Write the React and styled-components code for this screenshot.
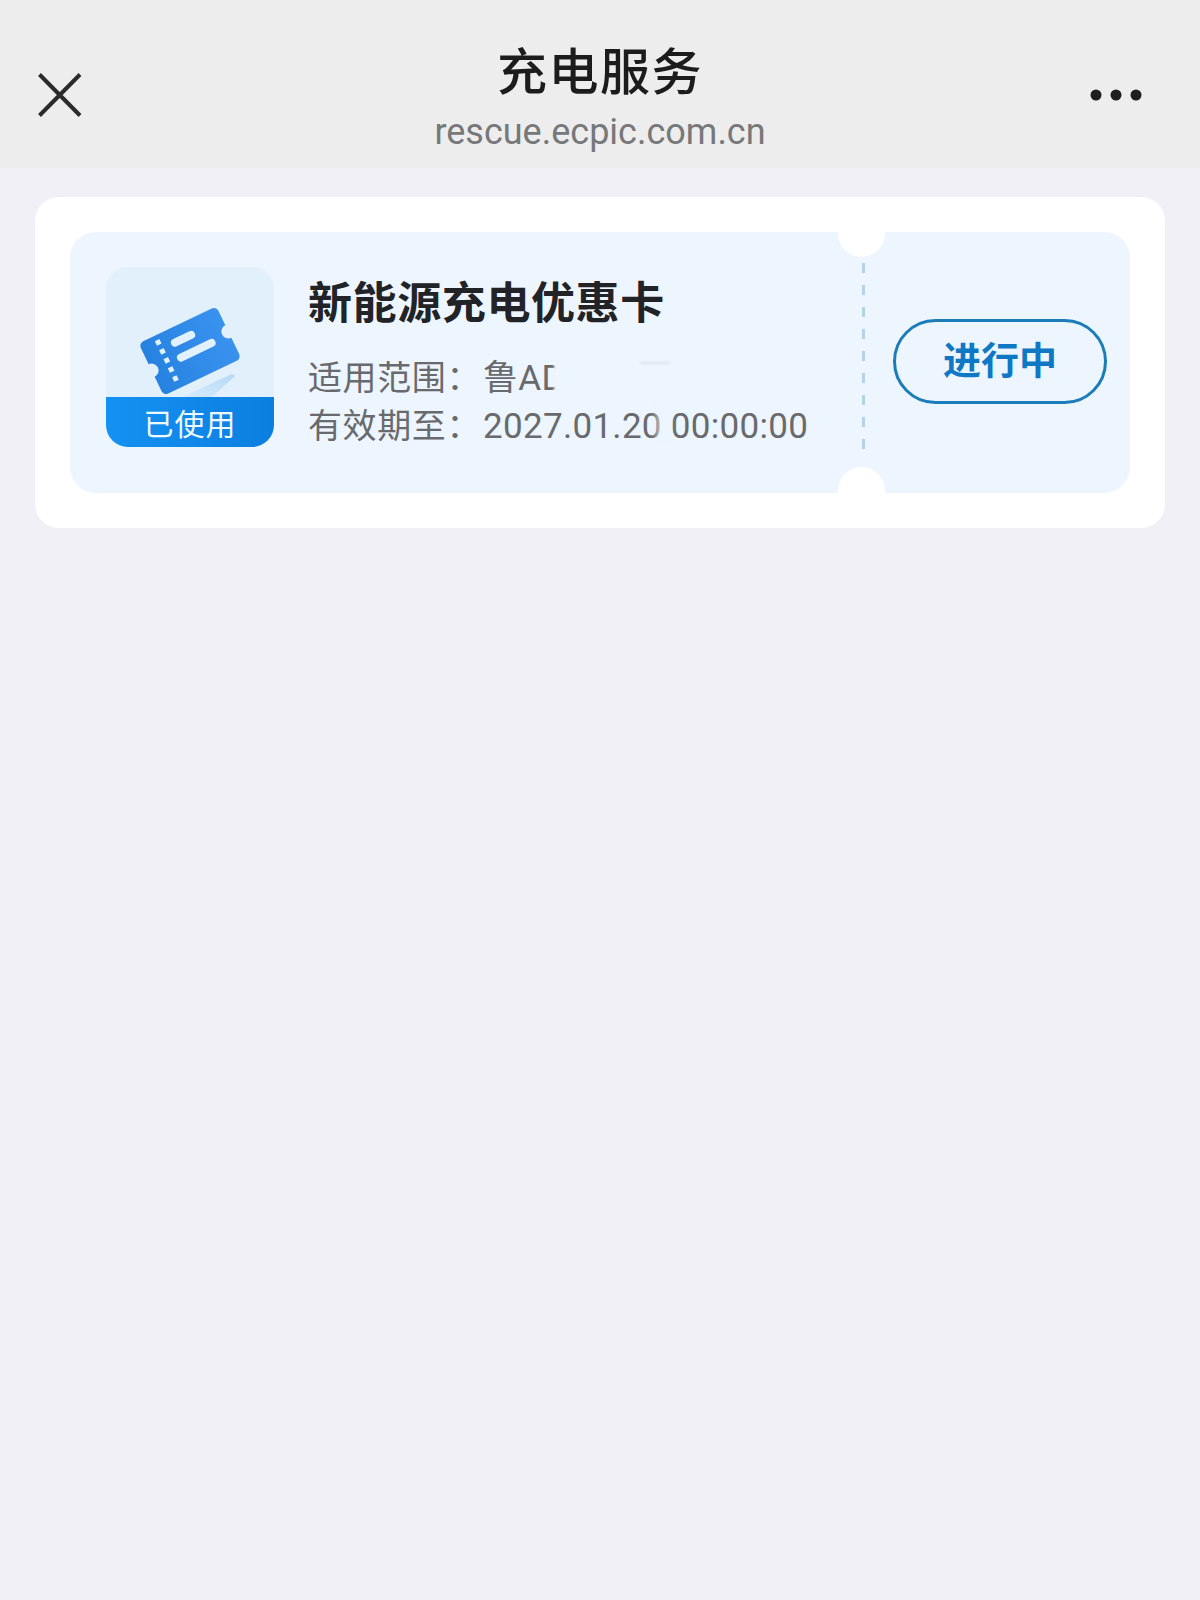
import styled, { createGlobalStyle } from 'styled-components'

const CJK = `'Noto Sans CJK SC', 'Noto Sans', sans-serif`
const LATIN = `Roboto, 'Noto Sans CJK SC', sans-serif`

const GlobalStyle = createGlobalStyle`
  html, body {
    margin: 0;
    padding: 0;
    background: #f0f0f6;
  }
  * {
    box-sizing: border-box;
  }
`

const Page = styled.div`
  width: 1200px;
  height: 1600px;
  background: #f0f0f6;
  font-family: ${CJK};
`

//-------------------------Header-----------------------
const Header = styled.header`
  height: 168px;
  background: #ededee;
  display: grid;
  grid-template-columns: 1fr auto 1fr;
  padding: 0 38px;
`

const IconButton = styled.div`
  display: flex;
  align-items: center;
  justify-content: ${(p) => (p.$end ? 'flex-end' : 'flex-start')};
  height: 44px;
  margin-top: 73px;
  padding-right: ${(p) => (p.$end ? '20px' : '0')};
  color: #2b2b2b;
`

const TitleBlock = styled.div`
  display: flex;
  flex-direction: column;
  align-items: center;
  padding-top: 32px;
`

const Title = styled.h1`
  margin: 0;
  font-size: 50px;
  line-height: 72px;
  font-weight: 500;
  letter-spacing: 1.5px;
  color: #1c1c1c;
`

const Url = styled.div`
  margin-top: 7px;
  font-family: ${LATIN};
  font-size: 36px;
  line-height: 42px;
  color: #77787a;
`

//-------------------------Card-----------------------
const Card = styled.section`
  margin: 29px 35px 0;
  padding: 35px;
  background: #fff;
  border-radius: 24px;
`

const Ticket = styled.div`
  position: relative;
  height: 261px;
  display: flex;
  background: #edf5fe;
  border-radius: 26px;
  overflow: hidden;
`

const Notch = styled.span`
  position: absolute;
  left: 768px;
  width: 47px;
  height: 47px;
  border-radius: 50%;
  background: #fff;
  ${(p) => (p.$bottom ? 'bottom: -21px;' : 'top: -22px;')}
`

const Main = styled.div`
  width: 792px;
  display: flex;
  gap: 34px;
  padding: 35px 0 0 36px;
`

const Thumb = styled.div`
  width: 168px;
  height: 180px;
  flex: none;
  border-radius: 22px;
  overflow: hidden;
  display: flex;
  flex-direction: column;
  background: #e2f0fb;
`

const ThumbArt = styled.svg`
  display: block;
  flex: 1;
`

const ThumbLabel = styled.div`
  height: 50px;
  background: linear-gradient(90deg, #1491f2, #0b7fe0);
  color: #eef8ff;
  font-size: 30px;
  line-height: 50px;
  text-align: center;
  letter-spacing: 1px;
`

const Info = styled.div`
  position: relative;
  flex: 1;
  min-width: 0;
`

const Name = styled.h2`
  margin: 0 0 20px;
  padding-top: 1px;
  font-size: 44px;
  line-height: 64px;
  font-weight: 700;
  letter-spacing: 0.6px;
  color: #222326;
  white-space: nowrap;
`

const Row = styled.div`
  display: flex;
  align-items: baseline;
  height: 48px;
  font-size: 34px;
  line-height: 48px;
  color: #696a6d;
  white-space: nowrap;
`

const RowLabel = styled.span`
  width: 175px;
  flex: none;
  letter-spacing: 0.6px;
`

const RowValue = styled.span`
  font-family: ${LATIN};
  font-size: 35px;
  letter-spacing: 0.3px;
`

// the plate number and part of the date are painted out in the source picture
const Smudge = styled.span`
  position: absolute;
  left: ${(p) => p.$left}px;
  top: ${(p) => p.$top}px;
  width: ${(p) => p.$width}px;
  height: ${(p) => p.$height}px;
  background: ${(p) => p.$color || '#edf5fe'};
  filter: blur(${(p) => p.$blur || 2}px);
`

const Divider = styled.div`
  width: 3px;
  flex: none;
  margin: 31px 0 41px;
  background: repeating-linear-gradient(180deg, #b3d3e6 0 10px, transparent 10px 22px);
`

const Stub = styled.div`
  flex: 1;
  display: flex;
  align-items: center;
  justify-content: flex-end;
  padding-right: 23px;
`

const StatusPill = styled.div`
  width: 214px;
  height: 85px;
  margin-top: -3px;
  border: 3px solid #1a7cb9;
  border-radius: 43px;
  color: #0f78c4;
  font-size: 38px;
  font-weight: 700;
  line-height: 72px;
  text-align: center;
`

const CloseIcon = () => (
  <svg width="44" height="44" viewBox="0 0 44 44" fill="none" stroke="currentColor" strokeWidth="4">
    <path d="M1.5 1.5 42 42.5M42 1.5 1.5 42.5" />
  </svg>
)

const MoreIcon = () => (
  <svg width="52" height="12" viewBox="0 0 52 12" fill="#1f1f1f">
    <circle cx="6" cy="6" r="5.5" />
    <circle cx="26" cy="6" r="5.5" />
    <circle cx="46" cy="6" r="5.5" />
  </svg>
)

const TicketArt = () => (
  <ThumbArt viewBox="0 0 168 130">
    <defs>
      <linearGradient id="ticketFill" x1="0" y1="0" x2="1" y2="0">
        <stop offset="0" stopColor="#2682e0" />
        <stop offset="1" stopColor="#3a92ef" />
      </linearGradient>
      <linearGradient id="ticketShade" x1="0" y1="1" x2="1" y2="0">
        <stop offset="0" stopColor="#d9ecfb" />
        <stop offset="1" stopColor="#b4d8f7" />
      </linearGradient>
    </defs>
    <path d="M76 130 L126 107 L129 109 L106 130 Z" fill="url(#ticketShade)" />
    <g transform="translate(84 84) rotate(-25.6)">
      <path
        fill="url(#ticketFill)"
        d="M-38 -29 H38 a5 5 0 0 1 5 5 V-8 a6.5 6.5 0 0 0 0 14 V24 a5 5 0 0 1 -5 5 H-38 a5 5 0 0 1 -5 -5 V8 a6.5 6.5 0 0 0 0 -14 V-24 a5 5 0 0 1 5 -5 Z"
      />
      <path d="M-25 -24 V26" stroke="#e2f1ff" strokeWidth="5" strokeDasharray="5 5" fill="none" />
      <rect x="-14" y="-18" width="26" height="8" rx="4" fill="#e2f1ff" />
      <rect x="-15" y="-2" width="42" height="8" rx="4" fill="#e2f1ff" />
    </g>
  </ThumbArt>
)

const App = () => {
  return (
    <Page>
      <GlobalStyle />
      <Header>
        <IconButton>
          <CloseIcon />
        </IconButton>
        <TitleBlock>
          <Title>充电服务</Title>
          <Url>rescue.ecpic.com.cn</Url>
        </TitleBlock>
        <IconButton $end>
          <MoreIcon />
        </IconButton>
      </Header>

      <Card>
        <Ticket>
          <Notch />
          <Notch $bottom />
          <Main>
            <Thumb>
              <TicketArt />
              <ThumbLabel>已使用</ThumbLabel>
            </Thumb>
            <Info>
              <Name>新能源充电优惠卡</Name>
              <Row>
                <RowLabel>适用范围：</RowLabel>
                <RowValue>鲁AD</RowValue>
              </Row>
              <Row>
                <RowLabel>有效期至：</RowLabel>
                <RowValue>2027.01.20 00:00:00</RowValue>
              </Row>
              <Smudge $left={246} $top={88} $width={40} $height={44} $blur={1} />
              <Smudge $left={332} $top={95} $width={30} $height={2} $color="#dde3ea" $blur={1} />
              <Smudge $left={348} $top={137} $width={14} $height={36} $color="rgba(237, 245, 254, 0.6)" $blur={3} />
            </Info>
          </Main>
          <Divider />
          <Stub>
            <StatusPill>进行中</StatusPill>
          </Stub>
        </Ticket>
      </Card>
    </Page>
  )
}

export default App
